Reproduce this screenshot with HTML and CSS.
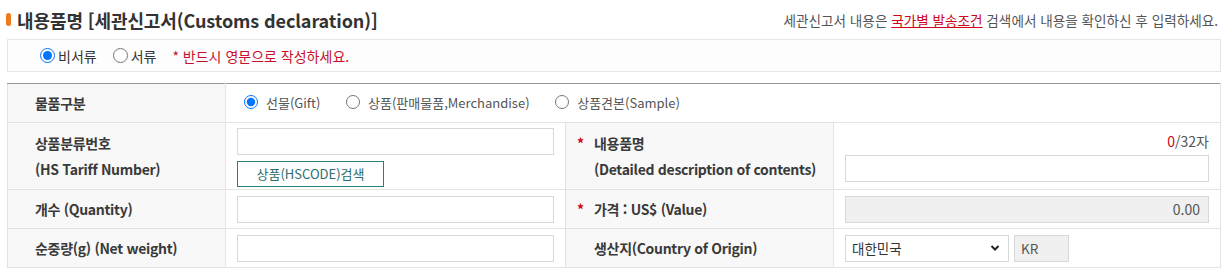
FILE: index.html
```html
<!DOCTYPE html>
<html lang="ko">
<head>
<meta charset="utf-8">
<link rel="stylesheet" href="styles.css">
</head>
<body>
<div class="head">
  <h2 class="title"><span class="bar"></span>내용품명 [세관신고서(Customs declaration)]</h2>
  <p class="guide">세관신고서 내용은 <a href="#" class="link">국가별 발송조건</a> 검색에서 내용을 확인하신 후 입력하세요.</p>
</div>
<div class="notice">
  <label class="opt"><input type="radio" name="doc" checked>비서류</label>
  <label class="opt"><input type="radio" name="doc">서류</label>
  <span class="warn">* 반드시 영문으로 작성하세요.</span>
</div>
<table class="form">
  <colgroup>
    <col class="c1"><col class="c2"><col class="c3"><col class="c4">
  </colgroup>
  <tr class="r1">
    <th>물품구분</th>
    <td colspan="3" class="kinds">
      <label class="opt2"><input type="radio" name="kind" checked>선물(Gift)</label>
      <label class="opt2"><input type="radio" name="kind">상품(판매물품,Merchandise)</label>
      <label class="opt2"><input type="radio" name="kind">상품견본(Sample)</label>
    </td>
  </tr>
  <tr class="r2">
    <th><span class="ln">상품분류번호</span><span class="ln">(HS Tariff Number)</span></th>
    <td>
      <input type="text" class="inp">
      <button type="button" class="btn">상품(HSCODE)검색</button>
    </td>
    <th><span class="ln"><span class="star">*</span>내용품명</span><span class="ln pad">(Detailed description of contents)</span></th>
    <td>
      <div class="count"><span class="red">0</span>/32자</div>
      <input type="text" class="inp wide">
    </td>
  </tr>
  <tr class="r3">
    <th>개수 (Quantity)</th>
    <td><input type="text" class="inp"></td>
    <th><span class="star">*</span>가격 : US$ (Value)</th>
    <td><input type="text" class="inp wide ro" value="0.00" readonly></td>
  </tr>
  <tr class="r4">
    <th>순중량(g) (Net weight)</th>
    <td><input type="text" class="inp"></td>
    <th><span class="pad">생산지(Country of Origin)</span></th>
    <td>
      <div class="origin">
        <div class="sel"><span>대한민국</span><svg width="10" height="8" viewBox="0 0 10 8"><path d="M1.5 2 L5 5.5 L8.5 2" fill="none" stroke="#222" stroke-width="2"/></svg></div>
        <div class="code">KR</div>
      </div>
    </td>
  </tr>
</table>
</body>
</html>
```
FILE: styles.css
```css
html, body {
  margin: 0;
  padding: 0;
  background: #fff;
}
body {
  width: 1228px;
  font-family: "Noto Sans CJK KR", "Noto Sans", sans-serif;
  color: #333;
}
.head {
  display: flex;
  justify-content: space-between;
  align-items: center;
  height: 39px;
  padding: 0 10px 0 6px;
}
.title {
  margin: 0;
  font-size: 18px;
  font-weight: bold;
  color: #333;
  display: flex;
  align-items: center;
  letter-spacing: -0.1px;
}
.bar {
  display: inline-block;
  width: 5px;
  height: 13px;
  border-radius: 3px;
  background: #f07a1a;
  margin-right: 6px;
}
.guide {
  margin: 0;
  font-size: 13.6px;
  color: #555;
}
.link {
  color: #d0021b;
  text-decoration: underline;
}
.notice {
  margin: 0 7px;
  height: 31px;
  border: 1px solid #e6e6e6;
  background: #fdfdfd;
  display: flex;
  align-items: center;
  padding-left: 32px;
  font-size: 14px;
}
.opt {
  display: inline-flex;
  align-items: center;
  margin-right: 16px;
  color: #333;
}
.opt input {
  margin: 0 3px 0 0;
  width: 15px;
  height: 15px;
}
.warn {
  color: #c8102e;
}
.form {
  margin: 11px 7px 0;
  width: 1213px;
  border-collapse: collapse;
  table-layout: fixed;
  border-top: 1px solid #999;
  border-bottom: 1px solid #e3e3e3;
}
.c1 { width: 218px; }
.c2 { width: 340px; }
.c3 { width: 268px; }
.c4 { width: 387px; }
.form th, .form td {
  border: 1px solid #e3e3e3;
  border-top: none;
  padding: 0;
  vertical-align: middle;
}
.form tr:first-child th, .form tr:first-child td {
  border-top: 1px solid #999;
}
.form th:first-child { border-left: 1px solid #e3e3e3; }
.form td:last-child { border-right: 1px solid #e3e3e3; }
.form th {
  background: #f8f8f8;
  text-align: left;
  font-size: 14px;
  font-weight: bold;
  color: #3a3a3a;
  padding-left: 27px;
  letter-spacing: -0.3px;
}
.form td {
  padding: 0 11px;
}
.r1 { height: 39px; }
.r2 { height: 67px; }
.r3 { height: 39px; }
.r4 { height: 39px; }
.r1 td { background: #fff; }
.ln {
  display: block;
  line-height: 26px;
}
.pad { padding-left: 17px; }
.r3 th:nth-child(3), .r2 th:nth-child(3), .r4 th:nth-child(3) { padding-left: 11px; }
.star {
  color: #d0021b;
  display: inline-block;
  width: 17px;
}
.kinds {
  font-size: 13px;
  color: #555;
  padding-left: 18px !important;
}
.opt2 {
  display: inline-flex;
  align-items: center;
  margin-right: 22px;
}
.opt2 input {
  margin: 0 8px 0 0;
  width: 14px;
  height: 14px;
}
.inp {
  display: block;
  box-sizing: border-box;
  width: 317px;
  height: 27px;
  border: 1px solid #d8d8d8;
  background: #fff;
  font-family: inherit;
  font-size: 13px;
  padding: 0 8px;
  margin: 0;
}
.wide {
  width: 364px;
}
.ro {
  background: #f0f0f0;
  text-align: right;
  color: #555;
  font-size: 14px;
}
.btn {
  display: block;
  margin-top: 6px;
  width: 147px;
  height: 26px;
  border: 1px solid #2e7d7a;
  background: #fff;
  color: #2e6e6c;
  font-family: inherit;
  font-size: 13px;
  padding: 0;
}
.r2 td:nth-child(2) .inp { margin-top: 2px; }
.count {
  text-align: right;
  font-size: 14px;
  color: #555;
  width: 364px;
  margin-bottom: 4px;
}
.red { color: #d0021b; }
.origin {
  display: flex;
  gap: 5px;
}
.sel {
  box-sizing: border-box;
  width: 164px;
  height: 27px;
  border: 1px solid #d8d8d8;
  display: flex;
  align-items: center;
  justify-content: space-between;
  padding: 0 8px 0 6px;
  font-size: 13.5px;
  color: #333;
}
.code {
  box-sizing: border-box;
  width: 55px;
  height: 27px;
  border: 1px solid #d8d8d8;
  background: #f0f0f0;
  font-size: 13.5px;
  color: #555;
  display: flex;
  align-items: center;
  padding-left: 6px;
}
```
